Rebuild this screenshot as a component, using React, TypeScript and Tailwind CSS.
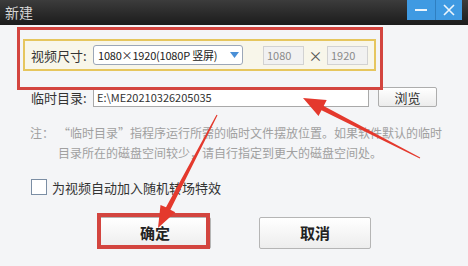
import React from "react";

function TitleBar() {
  return (
    <div className="flex h-[25px] items-start justify-between bg-gradient-to-b from-[#3c3c3c] to-[#1c1c1c]">
      <span className="pl-[5px] text-[14px] leading-[25px] text-[#d6d6d6]">新建</span>
      <div className="mr-[6px] flex h-[20px] bg-[#3f9ae2]">
        <div className="flex w-[28px] items-center justify-center">
          <div className="h-[2px] w-[12px] bg-white/90" />
        </div>
        <div className="w-px bg-[#2f7fc0]" />
        <div className="flex w-[26px] items-center justify-center">
          <svg width="12" height="12" viewBox="0 0 12 12">
            <path d="M1 1 L11 11 M11 1 L1 11" stroke="#ffffff" strokeOpacity="0.9" strokeWidth="1.6" />
          </svg>
        </div>
      </div>
    </div>
  );
}

function Arrows() {
  return (
    <svg className="pointer-events-none absolute left-0 top-0" width="468" height="266" viewBox="0 0 468 266">
      <polygon
        fill="#e4392d"
        points="303,98 326.7,100.1 323.7,105.9 420.2,157.6 419.8,158.4 321.5,110.3 318.5,116.1"
      />
      <polygon
        fill="#e4392d"
        points="158,228 175.3,212.2 170.4,209.7 217.5,115.3 216.5,114.7 166,207.3 160.5,205"
      />
    </svg>
  );
}

export default function App() {
  return (
    <div className="relative h-[266px] w-[468px] overflow-hidden bg-[#f4f5f7] font-['Noto_Sans_CJK_SC',sans-serif] text-[#333]">
      <TitleBar />

      <div className="pt-[14px]">
        {/* video size */}
        <div className="ml-[23px] flex h-[32px] w-[353px] items-center border-2 border-[#e6c65e] bg-[#f8f6ea] pl-[6px]">
          <span className="w-[62px] text-[13px] leading-none">视频尺寸:</span>
          <div className="flex h-[20px] w-[150px] items-center justify-between rounded-[3px] border border-[#9ca7b8] bg-white pl-[4px] pr-[3px]">
            <span className="whitespace-nowrap text-[11px] leading-none tracking-[-0.2px] text-[#222]">1080×1920(1080P 竖屏)</span>
            <svg width="9" height="6" viewBox="0 0 9 6">
              <path d="M0 0 H9 L4.5 6 Z" fill="#4a8fd6" />
            </svg>
          </div>
          <div className="ml-[20px] flex h-[19px] w-[41px] items-center border border-[#d2d2d2] bg-[#f1f1f1] pl-[3px] text-[11px] text-[#8a8a8a]">
            1080
          </div>
          <span className="w-[23px] text-center text-[14px] leading-none text-[#555]">×</span>
          <div className="flex h-[19px] w-[41px] items-center border border-[#d2d2d2] bg-[#f1f1f1] pl-[3px] text-[11px] text-[#8a8a8a]">
            1920
          </div>
        </div>

        {/* temp dir */}
        <div className="mt-[16px] flex items-center pl-[31px]">
          <span className="w-[62px] text-[13px] leading-none">临时目录:</span>
          <div className="flex h-[19px] w-[276px] items-center border border-[#a9a9a9] bg-white pl-[3px] text-[11px] text-[#333]">
            E:\ME20210326205035
          </div>
          <button className="ml-[9px] h-[20px] w-[59px] rounded-[2px] border border-[#adadad] bg-gradient-to-b from-white to-[#ececec] text-[13px] leading-none text-[#333]">
            浏览
          </button>
        </div>

        {/* note */}
        <div className="mt-[16px] flex pl-[30px] text-[12px] leading-[20px] text-[#a0a0a0]">
          <span className="w-[28px]">注：</span>
          <div>
            <div>“临时目录”指程序运行所需的临时文件摆放位置。如果软件默认的临时</div>
            <div>目录所在的磁盘空间较少，请自行指定到更大的磁盘空间处。</div>
          </div>
        </div>

        {/* checkbox */}
        <div className="mt-[16px] flex items-center pl-[31px]">
          <div className="h-[16px] w-[16px] border border-[#7b8ea4] bg-white" />
          <span className="ml-[5px] text-[13px] leading-none text-[#333]">为视频自动加入随机转场特效</span>
        </div>

        {/* buttons */}
        <div className="mt-[22px] flex gap-[48px] pl-[99px]">
          <button className="h-[32px] w-[112px] rounded-[2px] border border-[#b5b5b5] bg-gradient-to-b from-white to-[#ededed] text-[15px] font-bold text-[#222]">
            确定
          </button>
          <button className="h-[32px] w-[112px] rounded-[2px] border border-[#b5b5b5] bg-gradient-to-b from-white to-[#ededed] text-[15px] font-bold text-[#222]">
            取消
          </button>
        </div>
      </div>

      {/* annotations */}
      <div className="pointer-events-none absolute left-[17px] top-[27px] h-[63px] w-[366px] border-[3px] border-[#d3453f]" />
      <div className="pointer-events-none absolute left-[97px] top-[213px] h-[36px] w-[113px] border-[4px] border-[#d3453f]" />
      <Arrows />
    </div>
  );
}
